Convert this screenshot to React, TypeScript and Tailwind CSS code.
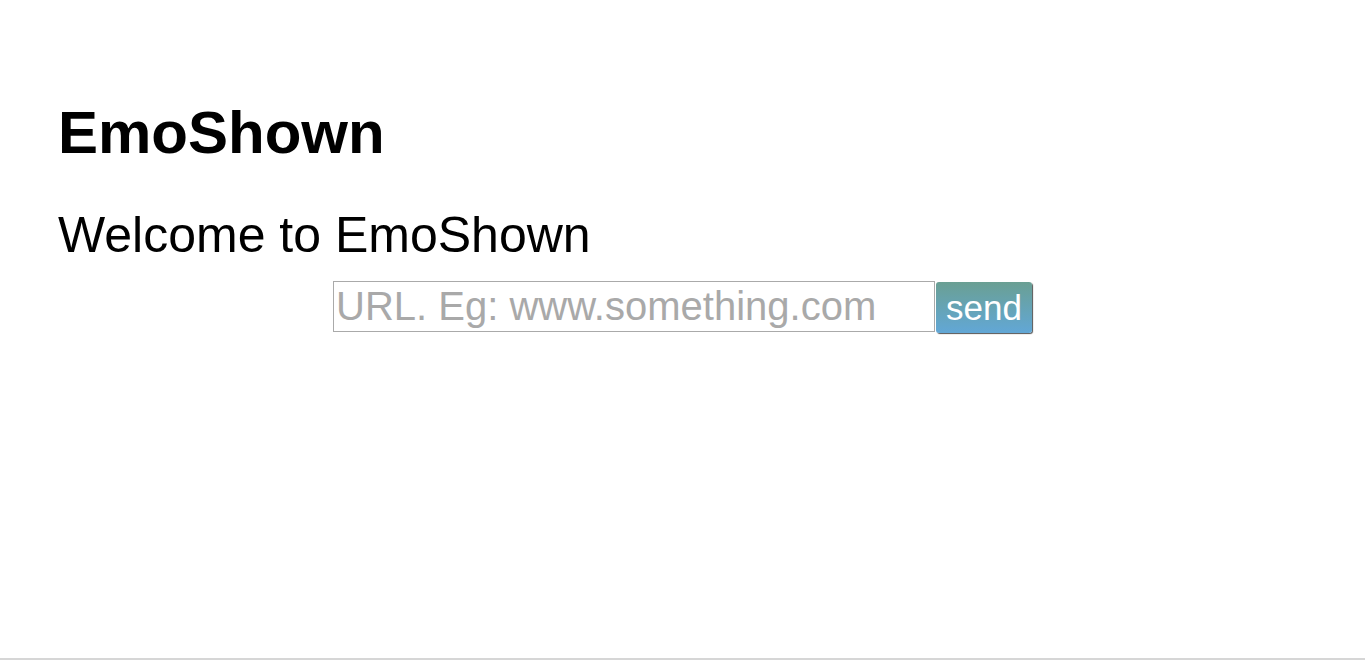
export default function App() {
  return (
    <div className="h-[660px] border-b-2 border-[#d6d6d6] bg-white font-['Liberation_Sans',Arial,sans-serif] text-black">
      <div className="px-[59px] pt-[98px]">
        <h1 className="-ml-[1px] text-[60px] font-bold leading-[69px]">EmoShown</h1>
        <p className="-ml-[1px] mt-[40px] text-[50px] leading-[57px]">Welcome to EmoShown</p>
        <div className="mt-[17px] flex items-start justify-center">
          <input
            type="text"
            placeholder="URL. Eg: www.something.com"
            className="box-border h-[51px] w-[602px] border border-[#aaaaaa] px-[2px] text-[40px] leading-[49px] outline-none placeholder:text-[#a9a9a9]"
          />
          <button className="mt-[1px] ml-[1px] box-border h-[51px] w-[96px] rounded-[3px] bg-gradient-to-b from-[#6a9f93] to-[#62a7d6] text-[35px] leading-[48px] text-white shadow-[1px_1px_1px_#555]">
            send
          </button>
        </div>
      </div>
    </div>
  );
}
